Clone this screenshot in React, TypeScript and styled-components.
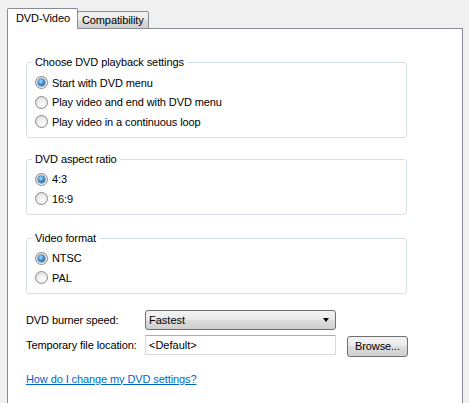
import React from "react";
import styled, { createGlobalStyle } from "styled-components";

const Global = createGlobalStyle`
  html, body { margin: 0; padding: 0; background: #f0f0f0; }
  body { font-family: "Liberation Sans", Arial, sans-serif; font-size: 11px; color: #000; }
  * { box-sizing: border-box; }
`;

const Page = styled.div`
  width: 469px;
  height: 403px;
  overflow: hidden;
  padding: 8px 0 0 7px;
  display: flex;
  flex-direction: column;
`;

const TabStrip = styled.div`
  display: flex;
  align-items: flex-end;
  height: 21px;
  position: relative;
  z-index: 1;
`;

const Tab = styled.div<{ $active?: boolean }>`
  height: ${(p) => (p.$active ? "21px" : "18px")};
  padding: ${(p) => (p.$active ? "0 7px 0 8px" : "0 4px 0 4px")};
  margin-left: ${(p) => (p.$active ? "0" : "-1px")};
  display: flex;
  align-items: center;
  padding-bottom: ${(p) => (p.$active ? "2px" : "1px")};
  border: 1px solid #898c95;
  border-bottom: ${(p) => (p.$active ? "none" : "1px solid #898c95")};
  border-radius: 2px 2px 0 0;
  background: ${(p) =>
    p.$active ? "#fff" : "linear-gradient(#f3f3f3 0%, #ebebeb 50%, #dddddd 51%, #cfcfcf 100%)"};
  order: ${(p) => (p.$active ? 0 : 1)};
  position: relative;
  z-index: ${(p) => (p.$active ? 2 : 1)};
  letter-spacing: -0.1px;
`;

const Panel = styled.div`
  width: 456px;
  flex: 1;
  margin-top: -1px;
  background: #fff;
  border: 1px solid #898c95;
  border-bottom: none;
  padding: 33px 0 0 18px;
  display: flex;
  flex-direction: column;
`;

const GroupBox = styled.div<{ $top: number }>`
  position: relative;
  width: 381px;
  border: 1px solid #d5dfe5;
  border-radius: 3px;
  margin-top: ${(p) => p.$top}px;
  padding: 10px 0 5px 8px;
  display: flex;
  flex-direction: column;
`;

const Legend = styled.span`
  position: absolute;
  top: -8px;
  left: 5px;
  padding: 0 3px;
  background: #fff;
  line-height: 14px;
  letter-spacing: -0.1px;
`;

const RadioRow = styled.label`
  display: flex;
  align-items: center;
  height: 19.5px;
  gap: 4px;
  letter-spacing: -0.1px;
`;

const RadioDot = styled.span<{ $checked?: boolean }>`
  width: 13px;
  height: 13px;
  border-radius: 50%;
  border: 1px solid #8a8a8a;
  background: radial-gradient(circle at 60% 65%, #ffffff 0%, #f0f0f0 40%, #d2d2d2 100%);
  display: flex;
  align-items: center;
  justify-content: center;
  flex: none;
  &::after {
    content: "";
    display: ${(p) => (p.$checked ? "block" : "none")};
    width: 7px;
    height: 7px;
    border-radius: 50%;
    background: radial-gradient(circle at 40% 35%, #b8e0ff 0%, #3d8fd0 45%, #1c4f86 100%);
    box-shadow: 0 0 0 0.5px #2a5c8e;
  }
`;

const Radio = ({ checked, label }: { checked?: boolean; label: string }) => (
  <RadioRow>
    <RadioDot $checked={checked} />
    <span>{label}</span>
  </RadioRow>
);

const Form = styled.div`
  margin-top: 16px;
  display: grid;
  grid-template-columns: 119px 191px auto;
  row-gap: 4px;
  align-items: center;
`;

const FieldLabel = styled.span`
  letter-spacing: -0.1px;
`;

const Select = styled.div`
  height: 20px;
  border: 1px solid #707070;
  border-radius: 3px;
  background: linear-gradient(#f2f2f2 0%, #ebebeb 45%, #dddddd 50%, #cfcfcf 100%);
  display: flex;
  align-items: center;
  justify-content: space-between;
  padding: 0 6px 0 3px;
`;

const Arrow = styled.span`
  width: 0;
  height: 0;
  border-left: 3.5px solid transparent;
  border-right: 3.5px solid transparent;
  border-top: 4px solid #000;
`;

const TextBox = styled.div`
  height: 20px;
  border: 1px solid #d6d8dc;
  border-top-color: #abadb3;
  background: #fff;
  display: flex;
  align-items: center;
  padding-left: 3px;
`;

const Button = styled.div`
  margin-left: 11px;
  width: 61px;
  height: 21px;
  margin-top: 2px;
  border: 1px solid #707070;
  border-radius: 3px;
  background: linear-gradient(#f2f2f2 0%, #ebebeb 45%, #dddddd 50%, #cfcfcf 100%);
  display: flex;
  align-items: center;
  justify-content: center;
  letter-spacing: -0.1px;
`;

const Link = styled.a`
  margin-top: 16px;
  color: #0066cc;
  text-decoration: underline;
  letter-spacing: -0.1px;
  align-self: flex-start;
  cursor: pointer;
`;

export default function App() {
  return (
    <Page>
      <Global />
      <TabStrip>
        <Tab $active>DVD-Video</Tab>
        <Tab>Compatibility</Tab>
      </TabStrip>
      <Panel>
        <GroupBox $top={0}>
          <Legend>Choose DVD playback settings</Legend>
          <Radio checked label="Start with DVD menu" />
          <Radio label="Play video and end with DVD menu" />
          <Radio label="Play video in a continuous loop" />
        </GroupBox>
        <GroupBox $top={21}>
          <Legend>DVD aspect ratio</Legend>
          <Radio checked label="4:3" />
          <Radio label="16:9" />
        </GroupBox>
        <GroupBox $top={23}>
          <Legend>Video format</Legend>
          <Radio checked label="NTSC" />
          <Radio label="PAL" />
        </GroupBox>
        <Form>
          <FieldLabel>DVD burner speed:</FieldLabel>
          <Select>
            <span>Fastest</span>
            <Arrow />
          </Select>
          <span />
          <FieldLabel>Temporary file location:</FieldLabel>
          <TextBox>&lt;Default&gt;</TextBox>
          <Button>Browse...</Button>
        </Form>
        <Link>How do I change my DVD settings?</Link>
      </Panel>
    </Page>
  );
}
